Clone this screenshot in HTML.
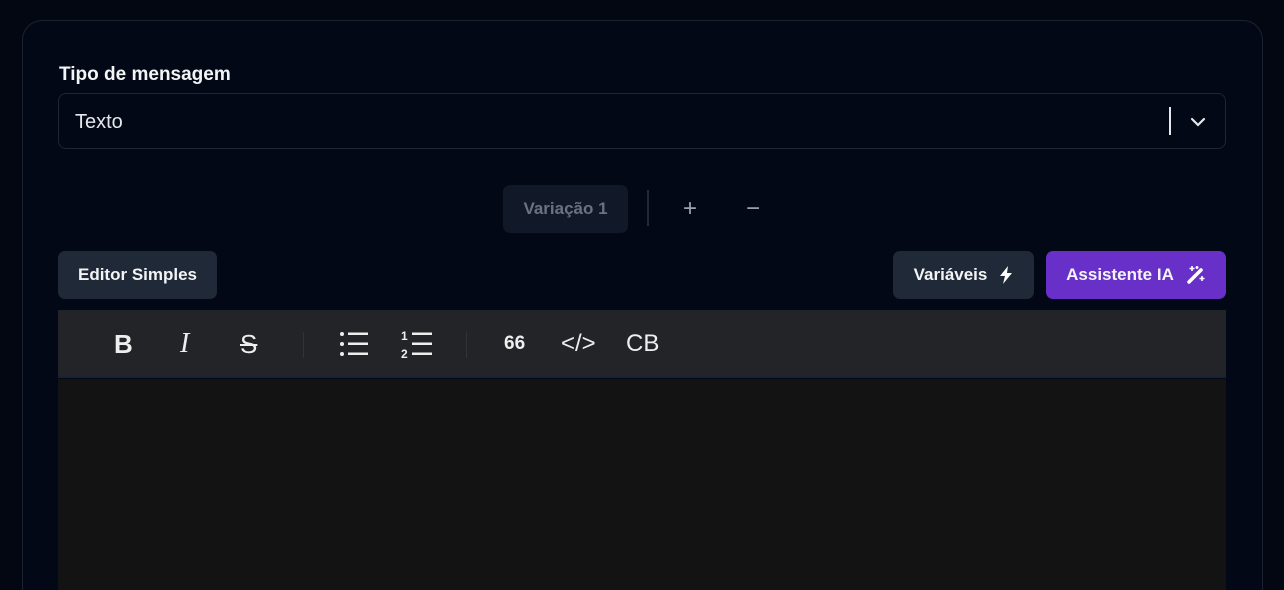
<!DOCTYPE html>
<html><head><meta charset="utf-8"><style>
*{box-sizing:border-box;margin:0;padding:0}
html,body{width:1284px;height:590px;overflow:hidden}
body{background:#030712;font-family:"Liberation Sans",sans-serif;position:relative;color:#f3f4f6}
.card{position:absolute;left:22px;top:20px;width:1241px;height:570px;border:1px solid #1c2230;border-bottom:none;border-radius:20px 20px 0 0;background:#030816}
.abs{position:absolute}
.lbl{left:59px;top:64px;font-size:19px;font-weight:bold;color:#f3f4f6}
.sel{left:58px;top:93px;width:1168px;height:56px;border:1px solid #1f2533;border-radius:8px}
.sel span{position:absolute;left:16px;top:17px;font-size:20px;color:#e5e7eb}
.btn{border-radius:7px;font-size:17px;font-weight:bold;display:flex;align-items:center;justify-content:center}
.tb{left:58px;top:310px;width:1168px;height:68px;background:#232427;border-bottom:2px solid #1a2236}
.ed{left:58px;top:379px;width:1168px;height:211px;background:#131313}
.ic{position:absolute;top:0;height:68px;display:flex;align-items:center;color:#eee}
</style></head><body>
<div class="card"></div>
<div class="abs lbl">Tipo de mensagem</div>
<div class="abs sel"><span>Texto</span>
<div class="abs" style="left:1110px;top:13px;width:2px;height:28px;background:#e5e7eb"></div>
<svg class="abs" style="left:1131px;top:20px" width="16" height="16" viewBox="0 0 16 16"><path d="M2 5l6 6 6-6" fill="none" stroke="#e5e7eb" stroke-width="2.2" stroke-linecap="round"/></svg>
</div>
<div class="abs btn" style="left:503px;top:185px;width:125px;height:48px;background:#111827;color:#6b7280">Variação 1</div>
<div class="abs" style="left:647px;top:190px;width:2px;height:36px;background:#1f2937"></div>
<div class="abs" style="left:683px;top:195px;font-size:24px;color:#9ca3af">+</div>
<div class="abs" style="left:746px;top:195px;font-size:24px;color:#9ca3af">−</div>
<div class="abs btn" style="left:58px;top:251px;width:159px;height:48px;background:#1f2937;color:#f3f4f6">Editor Simples</div>
<div class="abs btn" style="left:893px;top:251px;width:141px;height:48px;background:#1f2937;color:#f3f4f6">Variáveis<svg style="margin-left:12px" width="14" height="18" viewBox="0 0 14 18"><path d="M9 0L1 10h5l-2 8 9-11H8z" fill="#fff"/></svg></div>
<div class="abs btn" style="left:1046px;top:251px;width:180px;height:48px;background:#6930c9;color:#f3f4f6">Assistente IA<svg style="margin-left:12px" width="20" height="20" viewBox="0 0 20 20"><path d="M3 17L15 5" stroke="#fff" stroke-width="3.5" stroke-linecap="round"/><path d="M6 1v5M3.5 3.5h5M16 11v5M13.5 13.5h5M11 1v3M9.5 2.5h3" stroke="#fff" stroke-width="1.6"/></svg></div>
<div class="abs tb">
<div class="ic" style="left:56px;font-size:26px;font-weight:bold">B</div>
<div class="ic" style="left:122px;font-size:28px;font-family:'Liberation Serif',serif;font-style:italic">I</div>
<div class="ic" style="left:182px;font-size:26px;text-decoration:line-through">S</div>
<div class="abs" style="left:245px;top:22px;width:1px;height:26px;background:#333"></div>
<svg class="abs" style="left:281px;top:21px" width="30" height="26" viewBox="0 0 30 26"><g fill="#eee"><circle cx="3" cy="3" r="2"/><circle cx="3" cy="13" r="2"/><circle cx="3" cy="23" r="2"/><rect x="9" y="1.5" width="20" height="2.5"/><rect x="9" y="11.5" width="20" height="2.5"/><rect x="9" y="21.5" width="20" height="2.5"/></g></svg>
<svg class="abs" style="left:343px;top:19px" width="32" height="30" viewBox="0 0 32 30"><text x="0" y="11" font-size="12" font-weight="bold" fill="#eee" font-family="Liberation Sans">1</text><text x="0" y="29" font-size="12" font-weight="bold" fill="#eee" font-family="Liberation Sans">2</text><g fill="#eee"><rect x="11" y="3.5" width="20" height="2.5"/><rect x="11" y="13.5" width="20" height="2.5"/><rect x="11" y="23.5" width="20" height="2.5"/></g></svg>
<div class="abs" style="left:408px;top:22px;width:1px;height:26px;background:#333"></div>
<div class="ic" style="left:446px;font-size:19px;font-weight:bold">66</div>
<div class="ic" style="left:503px;font-size:24px">&lt;/&gt;</div>
<div class="ic" style="left:568px;font-size:24px">CB</div>
</div>
<div class="abs ed"></div>
</body></html>
